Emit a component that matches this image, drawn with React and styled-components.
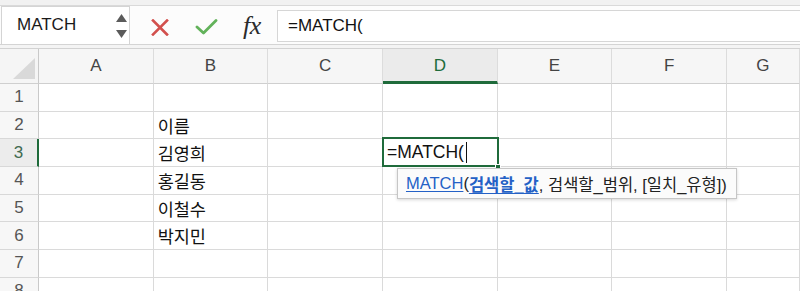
import React from 'react';
import styled, { createGlobalStyle } from 'styled-components';

const GlobalStyle = createGlobalStyle`
  html, body { margin: 0; padding: 0; background: #fff; }
  body {
    font-family: "Liberation Sans", "Noto Sans CJK KR", sans-serif;
    width: 800px; height: 291px; overflow: hidden;
  }
  * { box-sizing: border-box; }
`;

const Page = styled.div`
  width: 800px; height: 291px; overflow: hidden;
  display: flex; flex-direction: column;
`;

const TopStrip = styled.div`
  flex: none; height: 6px;
  background: #f1f1f1; border-bottom: 1px solid #d9d9d9;
`;

const FormulaBar = styled.div`
  flex: none; height: 39px;
  display: flex; align-items: flex-start;
  background: #fcfcfc; border-bottom: 1px solid #d4d4d4;
`;

const NameBox = styled.div`
  width: 129px; height: 38px; margin-left: 1px; margin-top: 0;
  background: #fff; border: 1px solid #d4d4d4; border-bottom: none;
  display: flex; align-items: center; justify-content: space-between;
  padding: 0 2px 2px 15px;
  font-size: 17px; color: #1a1a1a;
`;

const Spinner = styled.div`
  display: flex; flex-direction: column; gap: 8px; margin-top: 2px;
`;

const IconGroup = styled.div`
  display: flex; gap: 6px; margin-left: 10px; height: 38px; align-items: center;
`;

const IconButton = styled.div`
  width: 40px; height: 38px; display: flex; align-items: center; justify-content: center;
  padding-top: 4px;
`;

const Fx = styled.span`
  font-family: "Liberation Serif", "DejaVu Serif", serif;
  font-style: italic; font-size: 26px; color: #2b2b2b; letter-spacing: -0.5px;
  padding-bottom: 2px;
`;

const FormulaInput = styled.div`
  flex: 1; height: 32px; margin-top: 4px; margin-left: 5px;
  background: #fff; border: 1px solid #d6d6d6; border-right: none;
  display: flex; align-items: center; padding-left: 10px;
  font-size: 17px; color: #111;
`;

const Spacer = styled.div`
  flex: none; height: 4px; background: #f4f4f4; border-bottom: 1px solid #d2d2d2;
`;

const Sheet = styled.div`
  flex: 1;
  display: grid;
  grid-template-columns: 39px repeat(6, 114.67px) 1fr;
  grid-template-rows: 35px repeat(8, 27.7px);
`;

const Corner = styled.div`
  background: #f5f5f5;
  border-right: 1px solid #c9c9c9; border-bottom: 1px solid #cfcfcf;
  display: flex; align-items: flex-end; justify-content: flex-end;
  padding: 0 3px 4px 0;
`;

const ColHeader = styled.div`
  background: ${p => (p.$active ? '#ebebeb' : '#f6f6f6')};
  border-right: 1px solid #dcdcdc;
  border-bottom: ${p => (p.$active ? '3px solid #1f6b3b' : '1px solid #cfcfcf')};
  display: flex; align-items: center; justify-content: center;
  padding-top: ${p => (p.$active ? '2px' : '0')};
  font-size: 17px; color: ${p => (p.$active ? '#1f6b3b' : '#444')};
`;

const RowHeader = styled.div`
  background: ${p => (p.$active ? '#ececec' : '#f7f7f7')};
  border-right: ${p => (p.$active ? '2px solid #1f6b3b' : '1px solid #c9c9c9')};
  border-bottom: 1px solid #d8d8d8;
  display: flex; align-items: center; justify-content: center;
  font-size: 17px; color: ${p => (p.$active ? '#3f6a50' : '#555')};
`;

const Cell = styled.div`
  position: relative;
  background: #fff;
  border-right: 1px solid #dadada; border-bottom: 1px solid #dadada;
  display: flex; align-items: center;
  padding-left: 4px;
  font-family: "Liberation Sans", "Noto Sans CJK KR", sans-serif;
  font-size: 17.5px; color: #111; white-space: nowrap;
  ${p => p.$active && 'z-index: 2;'}
`;

const ActiveFrame = styled.div`
  position: absolute; top: -2px; left: -1px; right: -2px; bottom: -1px;
  border: 2px solid #1f6b3b; pointer-events: none;
`;

const FillHandle = styled.div`
  position: absolute; right: -4px; bottom: -4px; width: 6px; height: 6px;
  background: #1f6b3b; border: 1px solid #fff;
`;

const Caret = styled.span`
  display: inline-block; width: 1px; height: 21px; background: #111; margin-left: 2px;
`;

const Tooltip = styled.div`
  position: absolute; left: 14px; top: 29px;
  height: 31px; padding: 0 9px 0 8px;
  background: #fbfbfb; border: 1px solid #c6c6c6;
  box-shadow: 0 1px 3px rgba(0, 0, 0, 0.16);
  display: flex; align-items: center;
  font-size: 16.5px; color: #222; white-space: nowrap;
  font-family: "Liberation Sans", "Noto Sans CJK KR", sans-serif;
`;

const Link = styled.span`
  color: #2461c6; text-decoration: underline;
  text-underline-offset: 2px;
  font-weight: ${p => (p.$bold ? 700 : 400)};
`;

const cols = ['A', 'B', 'C', 'D', 'E', 'F', 'G'];
const names = { 2: '이름', 3: '김영희', 4: '홍길동', 5: '이철수', 6: '박지민' };

export default function App() {
  const rows = [1, 2, 3, 4, 5, 6, 7, 8];
  return (
    <Page>
      <GlobalStyle />
      <TopStrip />
      <FormulaBar>
        <NameBox>
          <span>MATCH</span>
          <Spinner>
            <svg width="11" height="8" viewBox="0 0 11 8"><path d="M5.5 0 L11 8 L0 8 Z" fill="#5b5b5b" /></svg>
            <svg width="11" height="8" viewBox="0 0 11 8"><path d="M0 0 L11 0 L5.5 8 Z" fill="#5b5b5b" /></svg>
          </Spinner>
        </NameBox>
        <IconGroup>
          <IconButton>
            <svg width="18" height="17" viewBox="0 0 18 17">
              <path d="M2 1.5 L16 15.5 M16 1.5 L2 15.5" stroke="#d2504d" strokeWidth="2.6" strokeLinecap="square" />
            </svg>
          </IconButton>
          <IconButton>
            <svg width="23" height="16" viewBox="0 0 23 16">
              <path d="M2 8 L8.5 14 L21 1.5" stroke="#62b25a" strokeWidth="2.8" fill="none" strokeLinecap="round" strokeLinejoin="round" />
            </svg>
          </IconButton>
          <IconButton>
            <Fx>fx</Fx>
          </IconButton>
        </IconGroup>
        <FormulaInput>=MATCH(</FormulaInput>
      </FormulaBar>
      <Spacer />
      <Sheet>
        <Corner>
          <svg width="22" height="21" viewBox="0 0 22 21"><path d="M22 0 L22 21 L0 21 Z" fill="#d9d9d9" /></svg>
        </Corner>
        {cols.map(c => (
          <ColHeader key={c} $active={c === 'D'}>{c}</ColHeader>
        ))}
        {rows.map(r => (
          <React.Fragment key={r}>
            <RowHeader $active={r === 3}>{r}</RowHeader>
            {cols.map(c => {
              const active = r === 3 && c === 'D';
              return (
                <Cell key={c} $active={active}>
                  {c === 'B' && names[r]}
                  {active && (
                    <>
                      <span>=MATCH(</span>
                      <Caret />
                      <ActiveFrame />
                      <FillHandle />
                      <Tooltip>
                        <Link>MATCH</Link>
                        <span>(</span>
                        <Link $bold>검색할_값</Link>
                        <span>, 검색할_범위, [일치_유형])</span>
                      </Tooltip>
                    </>
                  )}
                </Cell>
              );
            })}
          </React.Fragment>
        ))}
      </Sheet>
    </Page>
  );
}
